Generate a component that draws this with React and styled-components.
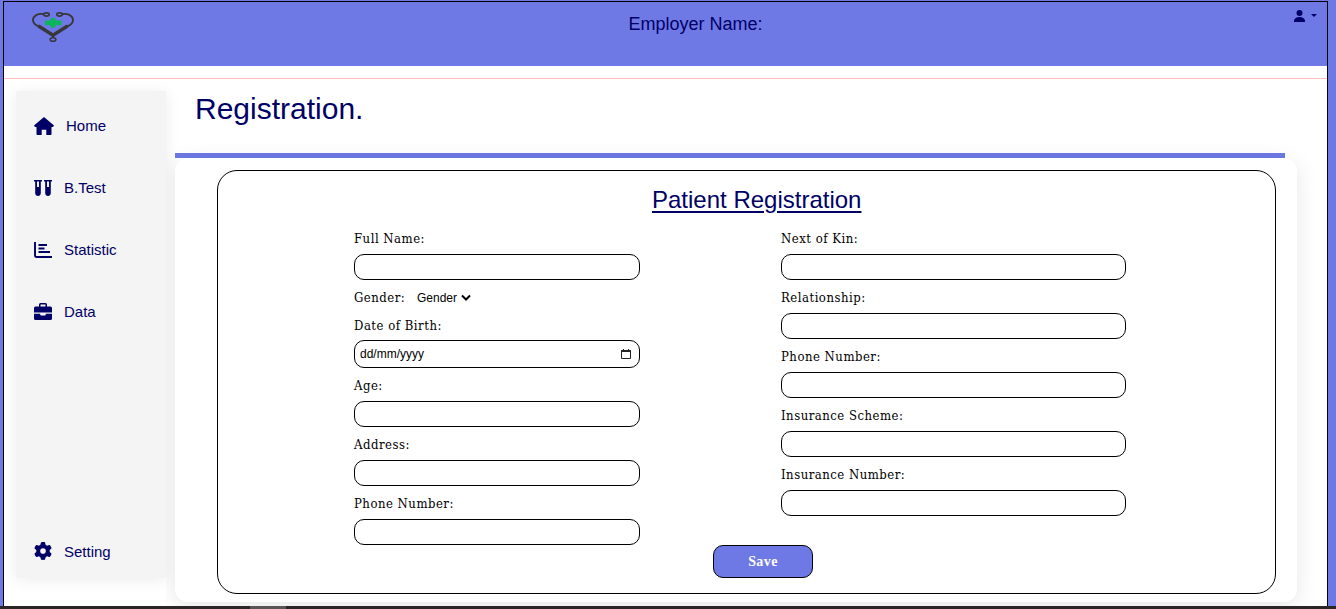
import React from 'react';
import styled, { createGlobalStyle } from 'styled-components';
import { FaGear } from 'react-icons/fa6';

const Global = createGlobalStyle`
  * { box-sizing: border-box; }
  body { margin: 0; background: #6f79e6; font-family: "Liberation Sans", Arial, sans-serif; color: #000066; overflow: hidden; }
`;
const Screen = styled.div`height: 609px; display: flex; flex-direction: column; padding: 1px 8px 0 3px;`;
const Frame = styled.div`
  flex: 1; min-height: 0; display: flex; flex-direction: column; background: #fff;
  border: 1px solid #000; border-bottom: 0; overflow: hidden;
`;
const Header = styled.header`
  height: 64px; flex: none; background: #6f79e6; display: grid;
  grid-template-columns: 1fr auto 1fr; align-items: start; padding: 0 10px 0 28px;
`;
const Logo = styled.svg`width: 42px; height: 30px; margin-top: 10px;`;
const Employer = styled.div`font-size: 18px; line-height: 22px; margin-top: 11px; margin-left: 42px; white-space: nowrap;`;
const UserMenu = styled.div`display: flex; justify-content: flex-end; align-items: center; gap: 6px; height: 28px;`;
const Caret = styled.span`border: 3px solid transparent; border-top-color: #000066; border-bottom: 0; margin-bottom: 1px;`;
const Rule = styled.div`height: 13px; flex: none; border-bottom: 1px solid #ffbcbc;`;
const Body = styled.div`flex: 1; min-height: 0; display: flex; padding-left: 12px;`;
const Sidebar = styled.nav`
  width: 150px; height: 487px; flex: none; margin: 12px 9px 0 0; padding: 3px 0 0 18px;
  background: #f4f4f4; box-shadow: 0 2px 14px rgba(0,0,0,.08); display: flex; flex-direction: column;
`;
const NavItem = styled.a`
  height: 62px; flex: none; display: flex; align-items: center; font-size: 15px; gap: 12px;
  svg { flex: none; margin-top: ${p => (p.$flush ? 0 : 2)}px; }
`;
const Spacer = styled.div`height: 178px; flex: none;`;
const Main = styled.main`
  flex: 1; min-width: 0; display: flex; flex-direction: column; padding-right: 30px;
  clip-path: inset(0 -30px -30px -9px);
`;
const Title = styled.h1`
  margin: 0 12px 0 0; height: 79px; flex: none; padding: 10px 0 0 20px; font-weight: 400;
  font-size: 30px; line-height: 40px; border-bottom: 5px solid #6f79e6;
`;
const Card = styled.section`
  height: 444px; flex: none; background: #fff; border-radius: 13px; padding: 12px 21px 8px 42px;
  box-shadow: 0 4px 22px rgba(0,0,0,.1);
`;
const Form = styled.form`height: 424px; border: 1px solid #000; border-radius: 20px; padding-left: 136px;`;
const FormTitle = styled.h2`
  margin: 0 0 0 298px; padding-top: 14px; height: 50px; font-weight: 400; font-size: 24px; line-height: 29px;
  text-decoration: underline; text-underline-offset: 3px; text-decoration-thickness: 2px; white-space: nowrap;
`;
const Columns = styled.div`display: grid; grid-template-columns: 286px 345px; column-gap: 141px; color: #000;`;
const Column = styled.div`display: flex; flex-direction: column;`;
const Label = styled.label`
  height: ${p => p.$h || 33}px; line-height: ${p => p.$lh || 35}px; font-size: 13px; white-space: nowrap;
  font-family: "DejaVu Serif Condensed", "DejaVu Serif", serif; font-stretch: condensed; letter-spacing: .5px;
`;
const Field = styled.div`
  height: ${p => p.$h || 26}px; border: 1px solid #000; border-radius: 10px; background: #fff;
  display: flex; align-items: center; justify-content: space-between; padding: 0 8px 0 5px;
  font-size: 12px;
`;
const GenderRow = styled.div`display: flex; align-items: center; height: 33px;`;
const GenderLabel = styled(Label)`width: 63px;`;
const Select = styled.span`display: flex; align-items: center; gap: 4px; font-size: 12px; padding-top: 2px;`;
const Save = styled.button`
  display: block; width: 100px; height: 33px; margin: 0 0 0 359px; padding: 0; border: 1px solid #000; border-radius: 10px;
  background: #6f79e6; color: #fff; font: 700 14px "Liberation Serif", serif; letter-spacing: .4px;
`;
const Dock = styled.div`height: 3px; flex: none; margin: 0 -8px 0 -3px; background: #2b2527; padding-left: 250px;`;
const DockItem = styled.div`width: 36px; height: 3px; background: #5b5456;`;

const HouseIcon = () => (
  <svg width="20" height="18" viewBox="0 0 20 18" fill="#000066">
    <path d="M10 0 20 8.600 19 10h-1.500v7.200a.8.8 0 0 1-.8.8H12.300v-5.200H7.700V18H3.300a.8.8 0 0 1-.8-.8V10H1L0 8.600z" />
  </svg>
);
const VialsIcon = () => (
  <svg width="18" height="16" viewBox="0 0 18 16" fill="#000066">
    <path fillRule="evenodd" d="M0 0h8v1.600H6.800v11.500a2.800 2.800 0 0 1-5.600 0V1.600H0zM3 1.600V7h2V1.600z" />
    <path fillRule="evenodd" d="M10 0h8v1.600h-1.200v11.500a2.800 2.800 0 0 1-5.600 0V1.600H10zM13 1.600V7h2V1.600z" />
  </svg>
);
const ChartIcon = () => (
  <svg width="18" height="16" viewBox="0 0 18 16" fill="none" stroke="#000066" strokeWidth="1.900">
    <path d="M1 0v13.200q0 1.800 1.800 1.800H18M4.500 3H13M4.500 6.500h6M4.500 10H16" />
  </svg>
);
const CaseIcon = () => (
  <svg width="18" height="17" viewBox="0 0 18 17" fill="#000066">
    <path fillRule="evenodd" d="M5 3.500V1.500Q5 0 6.500 0h5Q13 0 13 1.500v2h3.500Q18 3.500 18 5v4.500H0V5q0-1.500 1.500-1.500zM6.500 3.500h5v-2h-5z" />
    <path d="M0 10.800h6.200v.8q0 .9.9.9h3.800q.9 0 .9-.9v-.8H18v4.700q0 1.500-1.500 1.500h-15Q0 17 0 15.500z" />
  </svg>
);
const PersonIcon = () => (
  <svg width="11" height="12" viewBox="0 0 11 12" fill="#000066">
    <circle cx="5.500" cy="3" r="3" /><path d="M0 12v-1.500Q.8 7 5.500 7T11 10.500V12z" />
  </svg>
);

const right = ['Next of Kin:', 'Relationship:', 'Phone Number:', 'Insurance Scheme:', 'Insurance Number:'];

const TextField = ({ label }) => (<><Label>{label}</Label><Field /></>);

export default function App() {
  return (
    <Screen>
      <Global />
      <Frame>
        <Header>
          <Logo viewBox="0 0 42 30" fill="none" stroke="#38383b">
            <path d="M12 2.200C6 1 1 4 1 8c0 3 2 5 6 6.500" strokeWidth="1.900" />
            <path d="M30 2.200c6-1.200 11 1.800 11 5.800 0 3-2 5-6 6.500" strokeWidth="1.900" />
            <path d="M6.500 14 21 23.200 35.500 14" strokeWidth="3.400" />
            <path d="M21 22v4" strokeWidth="2.400" />
            <ellipse cx="14.500" cy="2.500" rx="2.700" ry="1.600" strokeWidth="1.600" />
            <ellipse cx="27.500" cy="2.500" rx="2.700" ry="1.600" strokeWidth="1.600" />
            <ellipse cx="21" cy="27.500" rx="2.900" ry="1.800" strokeWidth="1.600" />
            <path d="M21 6v9.800M13 10.900h16.500" stroke="#0cb45c" strokeWidth="4.600" />
          </Logo>
          <Employer>Employer Name:</Employer>
          <UserMenu><PersonIcon /><Caret /></UserMenu>
        </Header>
        <Rule />
        <Body>
          <Sidebar>
            <NavItem><HouseIcon />Home</NavItem>
            <NavItem><VialsIcon />B.Test</NavItem>
            <NavItem><ChartIcon />Statistic</NavItem>
            <NavItem $flush><CaseIcon />Data</NavItem>
            <Spacer />
            <NavItem $flush><FaGear size={18} />Setting</NavItem>
          </Sidebar>
          <Main>
            <Title>Registration.</Title>
            <Card>
              <Form>
                <FormTitle>Patient Registration</FormTitle>
                <Columns>
                  <Column>
                    <TextField label="Full Name:" />
                    <GenderRow>
                      <GenderLabel>Gender:</GenderLabel>
                      <Select>Gender
                        <svg width="10" height="7" viewBox="0 0 10 7" fill="none" stroke="#000" strokeWidth="2"><path d="m1 1.500 4 4 4-4" /></svg>
                      </Select>
                    </GenderRow>
                    <Label $h={27} $lh={26}>Date of Birth:</Label>
                    <Field $h={28}>dd/mm/yyyy
                      <svg width="10" height="11" viewBox="0 0 10 11" fill="none" stroke="#222"><path d="M.5 1.500h9v8h-9zM2.500 0v2M7.500 0v2" /><path d="M0 2h10" strokeWidth="2" /></svg>
                    </Field>
                    <TextField label="Age:" />
                    <TextField label="Address:" />
                    <TextField label="Phone Number:" />
                  </Column>
                  <Column>{right.map(l => <TextField key={l} label={l} />)}</Column>
                </Columns>
                <Save type="button">Save</Save>
              </Form>
            </Card>
          </Main>
        </Body>
      </Frame>
      <Dock><DockItem /></Dock>
    </Screen>
  );
}
